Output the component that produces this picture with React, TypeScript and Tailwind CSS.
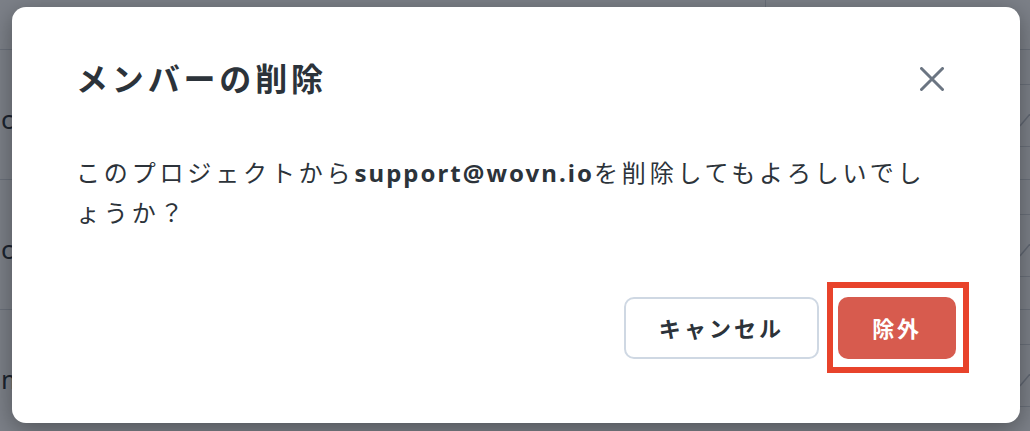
import React from 'react';

const jp = { fontFamily: '"Noto Sans", "Noto Sans CJK JP", sans-serif' };

function BackgroundPage() {
  const rows = [0, 1, 2];
  return (
    <div className="w-[1030px] h-[431px] overflow-hidden bg-white" style={jp}>
      {/* header strip */}
      <div className="h-[50px] flex border-b border-[#d7dbe0]">
        <div className="flex-1" />
        <div className="w-[265px] border-l border-[#d7dbe0]" />
      </div>
      {rows.map((r) => (
        <div key={r} className="h-[130px] flex border-b border-[#d7dbe0]">
          <div className="flex-1 flex items-center text-[26px] text-[#2c333a] leading-none pl-[1px] pt-[8px]">
            {r === 2 ? 'm' : 'c'}
          </div>
          <div className="w-[10px] flex flex-col">
            <div className="h-[35px] border-b border-[#d7dbe0]" />
            <div className="h-[62px] border-b border-[#d7dbe0] flex items-center">
              <svg width="10" height="14" viewBox="0 0 10 14" className="mt-[10px]">
                <path d="M0 12 L10 0" stroke="#c5cad1" strokeWidth="1.5" fill="none" />
              </svg>
            </div>
            <div className="flex-1" />
          </div>
        </div>
      ))}
    </div>
  );
}

function CloseIcon() {
  return (
    <svg width="24" height="24" viewBox="0 0 24 24" fill="none">
      <path d="M1.5 1.5 L22.5 22.5 M22.5 1.5 L1.5 22.5" stroke="#6b7582" strokeWidth="3" strokeLinecap="round" />
    </svg>
  );
}

export default function App() {
  return (
    <div className="relative w-[1030px] h-[431px] overflow-hidden">
      <BackgroundPage />

      {/* overlay + dialog */}
      <div className="absolute inset-0 bg-[rgba(17,24,39,0.55)] pt-[7px]">
        <div
          className="w-[1008px] ml-[12px] bg-white rounded-[14px] pt-12 px-16 pb-16 shadow-[0_6px_24px_rgba(0,0,0,0.35)]"
          style={jp}
        >
          <div className="flex items-center justify-between">
            <h2 className="text-[32px] leading-[48px] font-bold tracking-[0.12em] text-[#2c333a]">
              メンバーの削除
            </h2>
            <button className="mr-[12px] flex items-center justify-center">
              <CloseIcon />
            </button>
          </div>

          <p className="mt-[50px] text-[24px] leading-[40px] tracking-[0.16em] text-[#2c333a] pr-[8px]">
            このプロジェクトから<span className="font-bold tracking-[0.085em]">support@wovn.io</span>を削除してもよろしいでしょうか？
          </p>

          <div className="mt-16 flex justify-end gap-[19px]">
            <button className="w-[195px] h-[62px] rounded-[10px] border-2 border-[#cfd8e3] bg-white text-[22px] font-bold tracking-[0.14em] text-[#2c333a]">
              キャンセル
            </button>
            <div className="relative">
              <button className="w-[118px] h-[62px] rounded-[10px] bg-[#d75b4e] text-[22px] font-bold tracking-[0.12em] text-white">
                除外
              </button>
              <div className="absolute -left-[11px] -right-[13px] -top-[15px] -bottom-[14px] border-[6px] border-[#e8432b] pointer-events-none" />
            </div>
          </div>
        </div>
      </div>
    </div>
  );
}
